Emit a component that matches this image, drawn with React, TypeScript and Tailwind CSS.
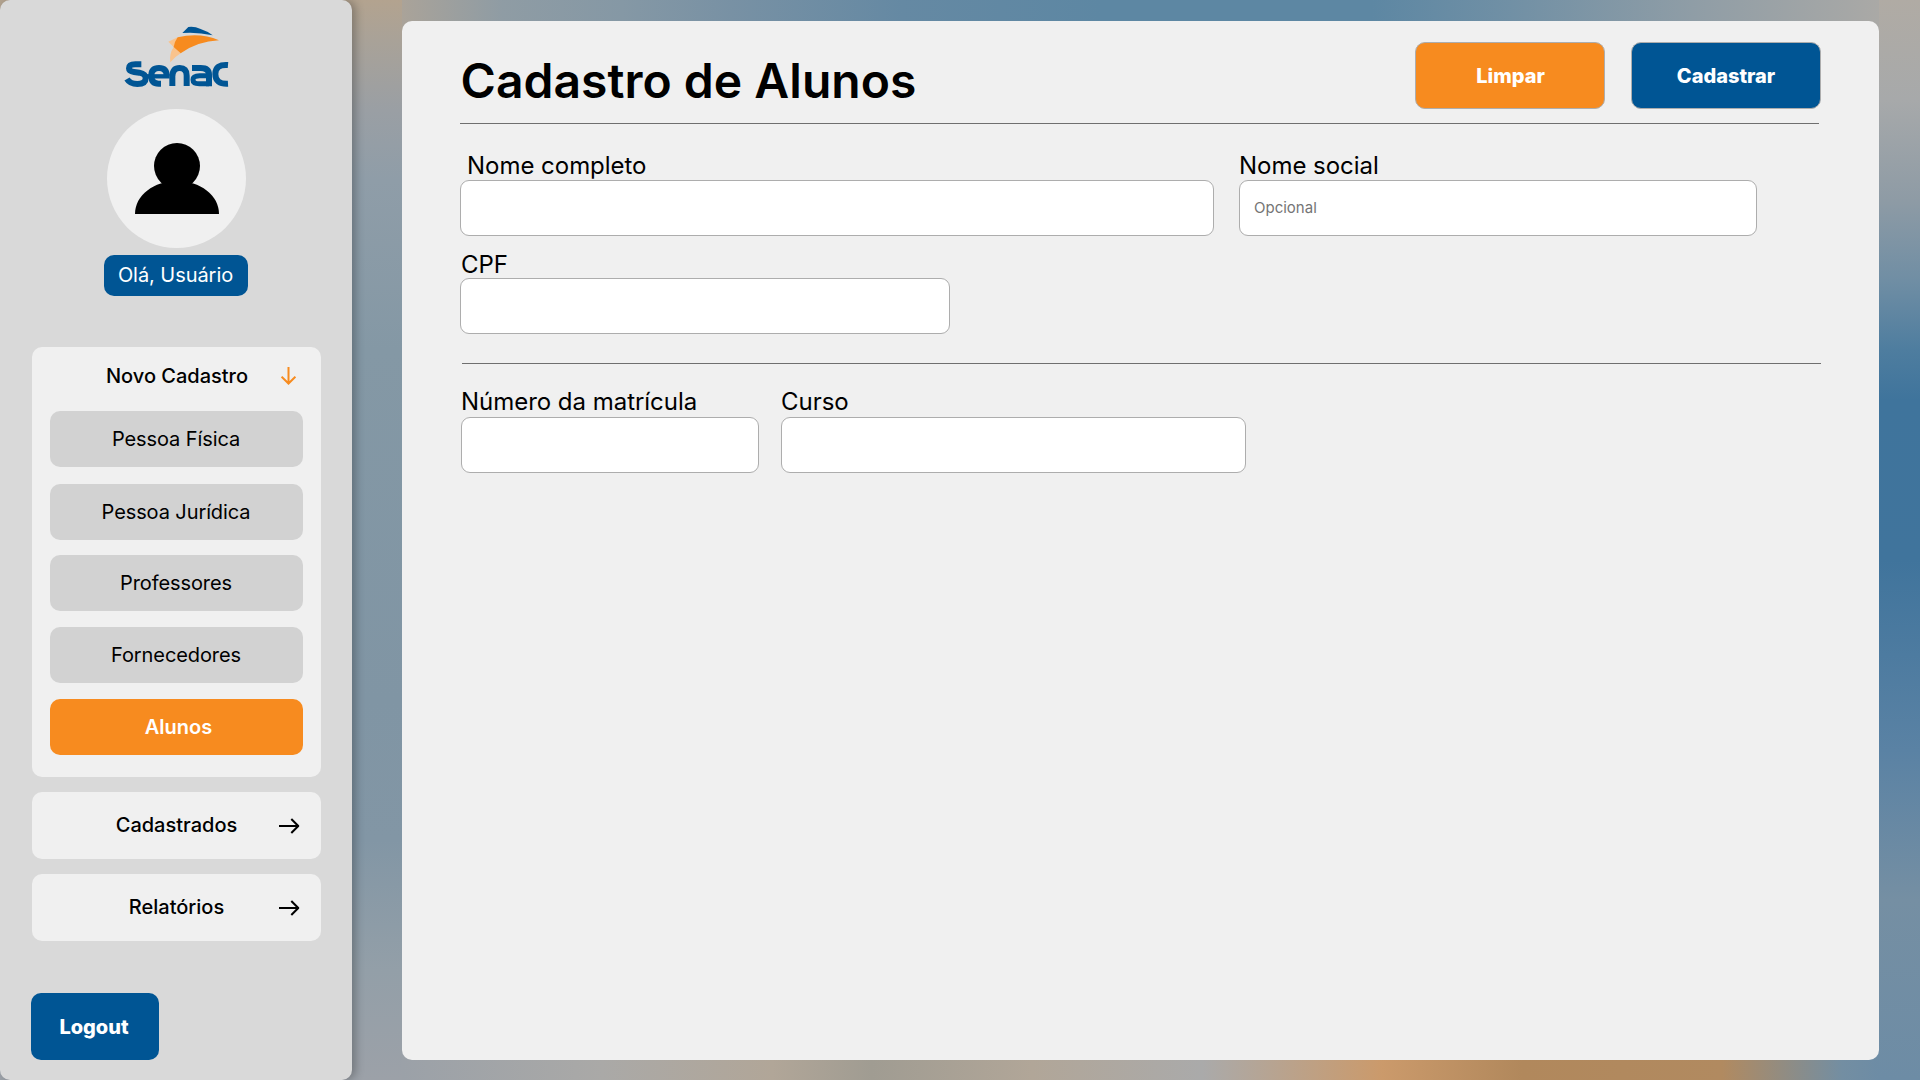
import React from "react";

const subItems = [
  { label: "Pessoa Física", gap: "mt-0" },
  { label: "Pessoa Jurídica", gap: "mt-[17px]" },
  { label: "Professores", gap: "mt-[15px]" },
  { label: "Fornecedores", gap: "mt-4" },
];

function Logo() {
  return (
    <svg width="160" height="90" viewBox="0 0 480 270" fill="none" className="mt-2.5 ml-2 shrink-0">
      <path d="M247 69L265 51Q285 49 300 56Q322 63 338 76Q290 65 247 69Z" fill="#005594" />
      <path d="M205 95L233 82L222 110L242 130Q224 141 211 157Q207 132 221 111Z" fill="#f9c38d" />
      <path d="M233 82Q300 66 357 91Q292 94 242 130L221 111Q223 96 233 82Z" fill="#f78b1f" />
      <g stroke="#005594" strokeWidth="18">
        <path d="M124 163H106Q87 163 87 175Q87 184 102 186L118 188Q137 192 137 205Q137 222 112 222Q90 222 81 207" />
        <path d="M154 203V197Q154 174 177 174Q200 174 200 197" />
        <path d="M138 199H209" strokeWidth="13" />
        <path d="M154 198Q154 221 176 221H183" />
        <path d="M217 228V199Q218 174 239 174Q260 174 260 197V228" />
        <path d="M276 174H302Q327 174 327 194V229" />
        <path d="M327 197H299Q279 197 279 209Q279 221 298 221H327" strokeWidth="15" />
        <path d="M384 165Q346 162 346 192Q346 223 384 221" />
      </g>
    </svg>
  );
}

function Arrow({ down = false }: { down?: boolean }) {
  return down ? (
    <svg width="15" height="18" viewBox="0 0 15 18" fill="none" stroke="#f78b1f" strokeWidth="2">
      <path d="M7.500 0V16.500M.6 9.700L7.500 16.500L14.400 9.700" />
    </svg>
  ) : (
    <svg width="21" height="16" viewBox="0 0 21 16" fill="none" stroke="#000" strokeWidth="2" strokeLinejoin="round">
      <path d="M0 8H19M12.300 1L19.300 8L12.300 15" />
    </svg>
  );
}

function Field({ label, width, labelClass = "", placeholder = "" }: { label: string; width: string; labelClass?: string; placeholder?: string }) {
  return (
    <label className={"flex flex-col " + width}>
      <span className={"h-[30px] text-2xl tracking-[-0.03px] whitespace-nowrap " + labelClass}>{label}</span>
      <input placeholder={placeholder} className="h-14 w-full rounded-[9px] border border-[#adadad] bg-white px-3.5 pb-0.5 text-[15px] placeholder:text-[#757575]" />
    </label>
  );
}

export default function App() {
  return (
    <div className="flex h-[1080px] w-[1920px] overflow-hidden bg-[#8796a2] bg-[linear-gradient(180deg,#b3a38f_0px,#a9a298_40px,#9a9fa4_110px,#8f9da8_180px,#8498a5_350px,#8095a4_700px,#8296a5_840px,#939fa8_970px,#9ca1a8_1080px),linear-gradient(180deg,#b0aba4_0px,#a7a9aa_100px,#8e9ba5_200px,#708ea4_280px,#4e7d9f_350px,#3f749c_400px,#40749c_560px,#5a82a4_750px,#758fa3_900px,#6d8ca5_1080px),linear-gradient(90deg,#aaa399_0px,#8f9ca4_100px,#8598a5_220px,#7891a4_330px,#6589a3_500px,#5d87a3_700px,#5d87a3_970px,#7190a5_1110px,#8f9da6_1290px,#aaa9a6_1477px),linear-gradient(90deg,#9ba1a8_0px,#aaa9a7_200px,#b1a698_370px,#a09c92_470px,#b1a698_630px,#aaaaaa_800px,#cb9a6b_980px,#b1885c_1120px,#b18a60_1320px,#738ea2_1440px,#6d8ca5_1477px)] bg-[length:402px_1080px,41px_1080px,1477px_40px,1477px_40px] bg-[position:0px_0px,1879px_0px,402px_0px,402px_1040px] bg-no-repeat font-['Inter',sans-serif] text-black">
      <aside className="flex h-[1080px] w-[352px] shrink-0 flex-col items-center rounded-[10px] bg-[#d9d9d9] shadow-[4px_0_8px_rgba(0,0,0,0.25)]">
        <Logo />
        <div className="mt-[9px] flex h-[139px] w-[139px] shrink-0 items-center justify-center rounded-full bg-[#f0f0f0] pl-0.5">
          <svg width="84" height="71" viewBox="0 0 84 71">
            <circle cx="42" cy="23" r="23" />
            <path d="M0 71C0 52 19 38 42 38S84 52 84 71Z" />
          </svg>
        </div>
        <div className="mt-[7px] flex h-[41px] w-36 items-center justify-center rounded-[10px] bg-[#005594] pr-px pb-0.5 text-xl tracking-[-0.06px] text-white">Olá, Usuário</div>
        <nav className="mt-[51px] flex w-[289px] flex-col">
          <section className="flex h-[430px] flex-col items-center rounded-[10px] bg-[#f0f0f0]">
            <div className="grid h-16 w-full grid-cols-[1fr_auto_1fr] items-center pb-[6px]">
              <span />
              <span className="pl-0.5 text-xl font-medium">Novo Cadastro</span>
              <span className="flex justify-end pr-[25px]"><Arrow down /></span>
            </div>
            {subItems.map((item) => (
              <button key={item.label} className={"h-14 w-[253px] shrink-0 rounded-[10px] bg-[#d2d2d2] text-xl tracking-[-0.1px] " + item.gap}>{item.label}</button>
            ))}
            <button className="mt-4 h-14 w-[253px] shrink-0 rounded-[10px] bg-[#f78b1f] pl-[5px] text-xl font-semibold text-white">Alunos</button>
          </section>
          {["Cadastrados", "Relatórios"].map((label) => (
            <div key={label} className="mt-[15px] grid h-[67px] grid-cols-[1fr_auto_1fr] items-center rounded-[10px] bg-[#f0f0f0]">
              <span />
              <span className="pb-0.5 pl-px text-xl font-medium">{label}</span>
              <span className="flex justify-end pr-[21px]"><Arrow /></span>
            </div>
          ))}
        </nav>
        <button className="mt-[52px] ml-[31px] h-[67px] w-32 self-start rounded-[10px] bg-[#005594] pr-0.5 text-xl font-extrabold text-white">Logout</button>
      </aside>

      <main className="mt-[21px] ml-[50px] h-[1039px] w-[1477px] rounded-[10px] bg-[#f0f0f0] pl-[58px]">
        <header className="flex h-[102px] w-[1361px] items-start pt-[21px]">
          <h1 className="mt-[10px] ml-[0.5px] text-5xl leading-[58px] font-semibold tracking-[0.03px]">Cadastro de Alunos</h1>
          <div className="ml-auto flex gap-[26px]">
            <button className="h-[67px] w-[190px] rounded-[10px] border border-[#adadad] bg-[#f78b1f] pl-px text-xl font-extrabold text-white">Limpar</button>
            <button className="h-[67px] w-[190px] rounded-[10px] border border-[#adadad] bg-[#005594] text-xl font-extrabold text-white">Cadastrar</button>
          </div>
        </header>
        <hr className="w-[1359px] border-0 border-t border-[#6f6f6f]" />
        <div className="mt-[26px] flex gap-[25px]">
          <Field label="Nome completo" width="w-[754px]" labelClass="pl-[7px] leading-8" />
          <Field label="Nome social" width="w-[518px]" labelClass="leading-8" placeholder="Opcional" />
        </div>
        <div className="mt-3">
          <Field label="CPF" width="w-[490px]" labelClass="pl-px leading-[34px]" />
        </div>
        <hr className="mt-[29px] ml-[2px] w-[1359px] border-0 border-t border-[#6f6f6f]" />
        <div className="mt-[23px] ml-[1px] flex gap-[22px]">
          <Field label="Número da matrícula" width="w-[298px]" labelClass="leading-[30px]" />
          <Field label="Curso" width="w-[465px]" labelClass="leading-[30px]" />
        </div>
      </main>
    </div>
  );
}
